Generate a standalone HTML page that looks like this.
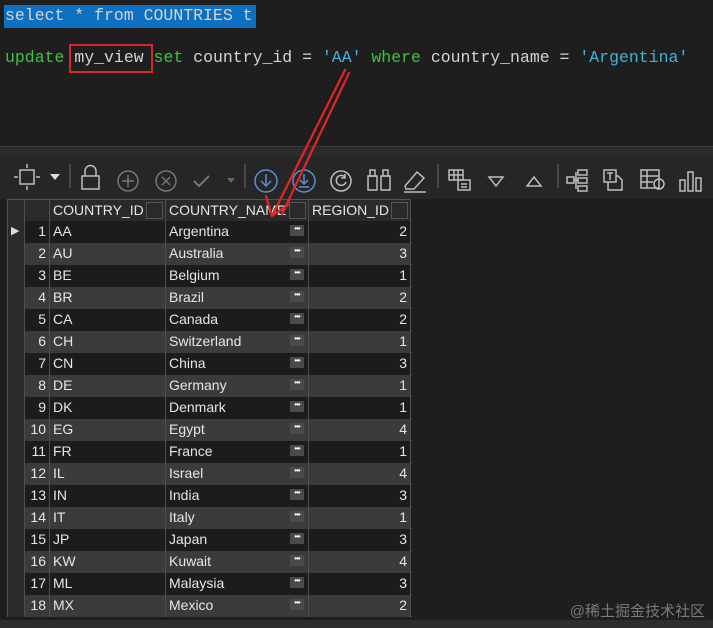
<!DOCTYPE html>
<html><head><meta charset="utf-8"><style>
*{margin:0;padding:0;box-sizing:border-box}
body{width:713px;height:628px;background:#1e1e1e;overflow:hidden;position:relative;font-family:"Liberation Sans",sans-serif}
.code{position:absolute;left:5px;font-family:"Liberation Mono",monospace;font-size:16.5px;color:#d4d4d4;white-space:pre}
.sel{position:absolute;left:4px;top:5px;width:252px;height:23px;background:#0e70c0}
.kw{color:#3cc53c}.str{color:#3fb4d8}
.box{position:absolute;left:69px;top:44px;width:84px;height:29px;border:2px solid #d9262b}
.band{position:absolute;left:0;top:146px;width:713px;height:10px;background:#2b2b2b;border-top:1px solid #3a3a3a}
.tb{position:absolute;left:0;top:156px;width:713px;height:43px;background:#262626}
.grid{position:absolute;left:7px;top:199px;width:405px;font-size:14px;color:#e6e6e6}
.r{position:relative;height:22px;border-bottom:1px solid #4e4e4e}
.r div{position:absolute;top:0;height:22px;line-height:21px;padding:0 3px;white-space:nowrap;border-right:1px solid #4e4e4e}
.a{left:0;width:18px;background:#2a2a2a;border-left:1px solid #4e4e4e}
.b{left:18px;width:25px;text-align:right}
.c{left:43px;width:116px}.d{left:159px;width:143px}.e{left:302px;width:102px;text-align:right}
.o{background:#1c1c1c}.ev{background:#3b3b3b}
.h{background:#2a2a2a;border-top:1px solid #555}
.dots{position:absolute;right:4px;top:4px;width:14px;height:11px;background:#4a4a4a;color:#fff;font-size:8px;line-height:8px;text-align:center;letter-spacing:-1px}
.hb{position:absolute;right:2px;top:2px;width:17px;height:17px;border:1px solid #555}
.wm{position:absolute;right:8px;top:600px;color:#7a7a7a;font-size:15px;font-family:"Liberation Sans","Noto Sans CJK SC",sans-serif}
.bot{position:absolute;left:0;top:620px;width:713px;height:8px;background:#2d2d2d}
</style></head><body>
<div class="sel"></div>
<div class="code" style="top:6px">select * from COUNTRIES t</div>
<div class="code" style="top:48px"><span class="kw">update</span> my_view <span class="kw">set</span> country_id = <span class="str">'AA'</span> <span class="kw">where</span> country_name = <span class="str">'Argentina'</span></div>
<div class="box"></div>
<div class="band"></div>
<div class="tb">
<svg width="713" height="43" viewBox="0 0 713 43" fill="none" stroke="#bdbdbd" stroke-width="1.5">
<rect x="20" y="14" width="14" height="14"/><path d="M27 8v4M27 30v4M14 21h4M36 21h4"/>
<path d="M50 18h10l-5 6z" fill="#ddd" stroke="none"/>
<path d="M70 8v24" stroke="#555"/>
<rect x="82" y="20" width="17" height="13"/><path d="M85 20v-5a5.5 5.5 0 0 1 11 0v5"/>
<circle cx="128" cy="25" r="10" stroke="#777"/><path d="M128 19v12M122 25h12" stroke="#777"/>
<circle cx="166" cy="25" r="10" stroke="#777"/><path d="M162 21l8 8M170 21l-8 8" stroke="#777"/>
<path d="M194 25l5 5 10-10" stroke="#777" stroke-width="2"/><path d="M227 22h8l-4 5z" fill="#666" stroke="none"/>
<path d="M245 8v24" stroke="#555"/>
<circle cx="266" cy="25" r="11" stroke="#5b8fd0"/><path d="M266 18v12M261 25l5 5 5-5" stroke="#5b8fd0"/>
<circle cx="304" cy="25" r="11" stroke="#5b8fd0"/><path d="M304 18v10M300 24l4 4 4-4M299 31h10" stroke="#5b8fd0"/>
<circle cx="341" cy="25" r="10"/><path d="M345 21a5 5 0 1 0 1 5M345 18v4h-4"/>
<rect x="368" y="20" width="9" height="14"/><rect x="381" y="20" width="9" height="14"/><rect x="370" y="14" width="5" height="6"/><rect x="383" y="14" width="5" height="6"/>
<path d="M405 30l12-14 7 6-10 11h-8zM404 36h22"/>
<path d="M438 8v24" stroke="#555"/>
<rect x="449" y="14" width="14" height="10"/><path d="M449 19h14M454 14v10M458 14v10"/><rect x="458" y="24" width="12" height="10"/><path d="M461 28h6M461 31h6"/>
<path d="M489 21h14l-7 9z"/><path d="M527 30h14l-7-9z"/>
<path d="M558 8v24" stroke="#555"/>
<rect x="567" y="21" width="7" height="6"/><rect x="578" y="14" width="9" height="5"/><rect x="578" y="22" width="9" height="5"/><rect x="578" y="30" width="9" height="5"/><path d="M574 24h4M576 16v17"/>
<rect x="604" y="14" width="12" height="12"/><path d="M607 17h6M610 17v7M608 26v8h14v-10l-4-4h-2"/>
<rect x="641" y="14" width="18" height="18"/><path d="M641 20h18M641 26h12M647 14v18"/><circle cx="659" cy="28" r="5"/>
<rect x="680" y="24" width="5" height="11"/><rect x="688" y="16" width="5" height="19"/><rect x="696" y="22" width="5" height="13"/>
</svg></div>
<div class="grid">
<div class="r"><div class="a h"></div><div class="b h"></div><div class="c h">COUNTRY_ID<span class="hb"></span></div><div class="d h">COUNTRY_NAME<span class="hb"></span></div><div class="e h" style="text-align:left">REGION_ID<span class="hb"></span></div></div>
<div class="r"><div class="a" style="color:#ddd;font-size:11px">&#9654;</div><div class="b o">1</div><div class="c o">AA</div><div class="d o">Argentina<span class="dots">•••</span></div><div class="e o">2</div></div>
<div class="r"><div class="a"></div><div class="b ev">2</div><div class="c ev">AU</div><div class="d ev">Australia<span class="dots">•••</span></div><div class="e ev">3</div></div>
<div class="r"><div class="a"></div><div class="b o">3</div><div class="c o">BE</div><div class="d o">Belgium<span class="dots">•••</span></div><div class="e o">1</div></div>
<div class="r"><div class="a"></div><div class="b ev">4</div><div class="c ev">BR</div><div class="d ev">Brazil<span class="dots">•••</span></div><div class="e ev">2</div></div>
<div class="r"><div class="a"></div><div class="b o">5</div><div class="c o">CA</div><div class="d o">Canada<span class="dots">•••</span></div><div class="e o">2</div></div>
<div class="r"><div class="a"></div><div class="b ev">6</div><div class="c ev">CH</div><div class="d ev">Switzerland<span class="dots">•••</span></div><div class="e ev">1</div></div>
<div class="r"><div class="a"></div><div class="b o">7</div><div class="c o">CN</div><div class="d o">China<span class="dots">•••</span></div><div class="e o">3</div></div>
<div class="r"><div class="a"></div><div class="b ev">8</div><div class="c ev">DE</div><div class="d ev">Germany<span class="dots">•••</span></div><div class="e ev">1</div></div>
<div class="r"><div class="a"></div><div class="b o">9</div><div class="c o">DK</div><div class="d o">Denmark<span class="dots">•••</span></div><div class="e o">1</div></div>
<div class="r"><div class="a"></div><div class="b ev">10</div><div class="c ev">EG</div><div class="d ev">Egypt<span class="dots">•••</span></div><div class="e ev">4</div></div>
<div class="r"><div class="a"></div><div class="b o">11</div><div class="c o">FR</div><div class="d o">France<span class="dots">•••</span></div><div class="e o">1</div></div>
<div class="r"><div class="a"></div><div class="b ev">12</div><div class="c ev">IL</div><div class="d ev">Israel<span class="dots">•••</span></div><div class="e ev">4</div></div>
<div class="r"><div class="a"></div><div class="b o">13</div><div class="c o">IN</div><div class="d o">India<span class="dots">•••</span></div><div class="e o">3</div></div>
<div class="r"><div class="a"></div><div class="b ev">14</div><div class="c ev">IT</div><div class="d ev">Italy<span class="dots">•••</span></div><div class="e ev">1</div></div>
<div class="r"><div class="a"></div><div class="b o">15</div><div class="c o">JP</div><div class="d o">Japan<span class="dots">•••</span></div><div class="e o">3</div></div>
<div class="r"><div class="a"></div><div class="b ev">16</div><div class="c ev">KW</div><div class="d ev">Kuwait<span class="dots">•••</span></div><div class="e ev">4</div></div>
<div class="r"><div class="a"></div><div class="b o">17</div><div class="c o">ML</div><div class="d o">Malaysia<span class="dots">•••</span></div><div class="e o">3</div></div>
<div class="r"><div class="a"></div><div class="b ev">18</div><div class="c ev">MX</div><div class="d ev">Mexico<span class="dots">•••</span></div><div class="e ev">2</div></div>
</div>
<div class="bot"></div>
<div class="wm">@稀土掘金技术社区</div>
<svg style="position:absolute;left:0;top:0" width="713" height="628" fill="none" stroke="#e0252b" stroke-width="2.2" stroke-linecap="round">
<path d="M345 70L272 216M349 73L282 214"/>
<path d="M272 216L266 196M272 216L288 205M282 214L290 198"/>
</svg>
</body></html>
